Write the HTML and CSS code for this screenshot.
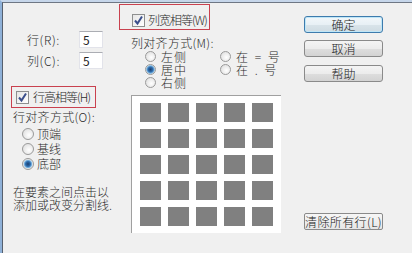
FILE: index.html
```html
<!DOCTYPE html>
<html>
<head>
  <meta charset="utf-8">
  <title>表格属性</title>
  <link rel="stylesheet" href="styles.css">
</head>
<body>
  <div class="window">
    <div class="dialog">

      <div class="col-left">
        <div class="field field-first">
          <label>行(R):</label>
          <input type="text" value="5">
        </div>
        <div class="field">
          <label>列(C):</label>
          <input type="text" value="5">
        </div>

        <div class="check-box row-check">
          <span class="check"><svg width="11" height="11" viewBox="0 0 11 11"><path d="M2 5.5 L4.5 8.5 L9 1.5" fill="none" stroke="#3b4f8c" stroke-width="2"/></svg></span>
          <span class="check-label">行高相等(H)</span>
        </div>

        <div class="heading">行对齐方式(O):</div>
        <div class="radio-list">
          <div class="radio-row"><span class="radio"></span>顶端</div>
          <div class="radio-row"><span class="radio"></span>基线</div>
          <div class="radio-row"><span class="radio on"></span>底部</div>
        </div>

        <div class="hint">
          <div>在要素之间点击以</div>
          <div>添加或改变分割线.</div>
        </div>
      </div>

      <div class="col-mid">
        <div class="check-box col-check">
          <span class="check"><svg width="11" height="11" viewBox="0 0 11 11"><path d="M2 5.5 L4.5 8.5 L9 1.5" fill="none" stroke="#3b4f8c" stroke-width="2"/></svg></span>
          <span class="check-label">列宽相等(W)</span>
        </div>

        <div class="heading mid-heading">列对齐方式(M):</div>
        <div class="radio-grid">
          <div class="radio-row"><span class="radio"></span><span class="wide">左侧</span></div>
          <div class="radio-row"><span class="radio"></span><span class="wide">在 = 号</span></div>
          <div class="radio-row"><span class="radio on"></span><span class="wide">居中</span></div>
          <div class="radio-row"><span class="radio"></span><span class="wide">在 . 号</span></div>
          <div class="radio-row"><span class="radio"></span><span class="wide">右侧</span></div>
        </div>

        <div class="preview">
          <span></span><span></span><span></span><span></span><span></span>
          <span></span><span></span><span></span><span></span><span></span>
          <span></span><span></span><span></span><span></span><span></span>
          <span></span><span></span><span></span><span></span><span></span>
          <span></span><span></span><span></span><span></span><span></span>
        </div>
      </div>

      <div class="col-right">
        <button class="btn btn-default">确定</button>
        <button class="btn">取消</button>
        <button class="btn btn-help">帮助</button>
        <button class="btn btn-clear">清除所有行(L)</button>
      </div>

    </div>
  </div>
</body>
</html>
```

FILE: styles.css
```css
body {
  margin: 0;
  background: #f0f0f0;
  font-family: "Noto Sans CJK SC", "Noto Sans", sans-serif;
  font-size: 12px;
  font-weight: 300;
  color: #2a2a2a;
  white-space: nowrap;
}

.window {
  width: 410px;
  height: 251px;
  border-top: 2px solid #c6d6ea;
  border-left: 2px solid #8fb1d8;
  background: #f0f0f0;
}

.dialog {
  display: flex;
  height: 250px;
  border-top: 1px solid #6e7784;
  border-left: 1px solid #56606e;
  background: #f0f0f0;
}

/* left column */
.col-left {
  width: 108px;
  padding-left: 8px;
  display: flex;
  flex-direction: column;
}

.field {
  display: flex;
  align-items: center;
  height: 17px;
  margin-top: 4px;
}

.field-first {
  margin-top: 28px;
}

.field label {
  width: 52px;
  margin-left: 16px;
  line-height: 14px;
  letter-spacing: 0.6px;
}

.field input {
  box-sizing: border-box;
  width: 24px;
  height: 17px;
  padding: 0 0 0 3px;
  border: 1px solid #e2e3ea;
  border-top-color: #abadb3;
  background: #fff;
  font-family: inherit;
  font-size: 12px;
  color: #222;
}

.check-box {
  box-sizing: border-box;
  display: flex;
  align-items: center;
  border: 1px solid #c9414f;
  line-height: 14px;
}

.check-label {
  letter-spacing: -1px;
}

.row-check {
  width: 85px;
  height: 22px;
  margin-top: 17px;
  padding-left: 4px;
}

.check {
  box-sizing: border-box;
  flex: none;
  width: 13px;
  height: 13px;
  margin-right: 4px;
  border: 1px solid #8e8f8f;
  background: linear-gradient(135deg, #e6e6e6, #ffffff);
  display: flex;
  align-items: center;
  justify-content: center;
}

.heading {
  line-height: 14px;
  margin-top: 2px;
  margin-left: 2px;
  letter-spacing: 0.3px;
}

.radio-list {
  margin-top: 2px;
  margin-left: 11px;
}

.radio-row {
  display: flex;
  align-items: center;
  height: 15px;
  line-height: 13px;
}

.radio {
  box-sizing: border-box;
  flex: none;
  width: 12px;
  height: 12px;
  margin-right: 3px;
  border-radius: 50%;
  border: 1px solid #9a9a9a;
  background: radial-gradient(circle at 60% 60%, #ffffff 0%, #e4e4e4 70%, #d2d2d2 100%);
}

.radio.on {
  background: radial-gradient(circle, #1c3f6e 0, #2f6fb0 2.5px, #8ec3ea 4px, #e8e8e8 4.6px, #ffffff 100%);
}

.hint {
  margin-top: 14px;
  margin-left: 2px;
  line-height: 13px;
}

/* middle column */
.col-mid {
  width: 185px;
  display: flex;
  flex-direction: column;
}

.col-check {
  width: 91px;
  height: 26px;
  margin-top: 1px;
  padding-left: 12px;
  padding-top: 6px;
}

.col-check .check {
  margin-right: 3px;
}

.mid-heading {
  margin-top: 6px;
  margin-left: 12px;
}

.radio-grid {
  display: grid;
  grid-template-columns: 75px auto;
  margin-left: 26px;
}

.radio-grid .radio-row {
  height: 13px;
}

.radio-grid .radio {
  width: 11px;
  height: 11px;
  margin-right: 5px;
}

.wide {
  letter-spacing: 1px;
  word-spacing: 2px;
}

.preview {
  box-sizing: border-box;
  width: 150px;
  height: 138px;
  margin-top: 6px;
  margin-left: 12px;
  padding: 7px 0 0 8px;
  border-top: 1px solid #a0a0a0;
  border-left: 1px solid #a0a0a0;
  background: #fff;
  display: grid;
  grid-template-columns: repeat(5, 21px);
  grid-auto-rows: 19px;
  gap: 7px;
}

.preview span {
  background: #808080;
}

/* right column */
.col-right {
  display: flex;
  flex-direction: column;
  width: 79px;
}

.btn {
  box-sizing: border-box;
  width: 79px;
  height: 17px;
  margin-top: 7px;
  padding: 0;
  border: 1px solid #8a8a8a;
  border-radius: 3px;
  background: linear-gradient(#f4f4f4 0%, #ececec 50%, #dedede 51%, #d3d3d3 100%);
  font-family: inherit;
  font-size: 12px;
  font-weight: 300;
  line-height: 14px;
  color: #222;
}

.btn-default {
  margin-top: 13px;
  border-color: #3d7bad;
  box-shadow: inset 0 0 0 1px #bfe6f7;
  background: linear-gradient(#f2f7fa 0%, #e8f0f5 50%, #d9e4ea 51%, #cfdbe2 100%);
}

.btn-help {
  margin-top: 8px;
}

.btn-clear {
  margin-top: 131px;
  border-radius: 2px;
  letter-spacing: 0.4px;
  background: linear-gradient(#f6f6f6, #e6e6e6);
}
```
